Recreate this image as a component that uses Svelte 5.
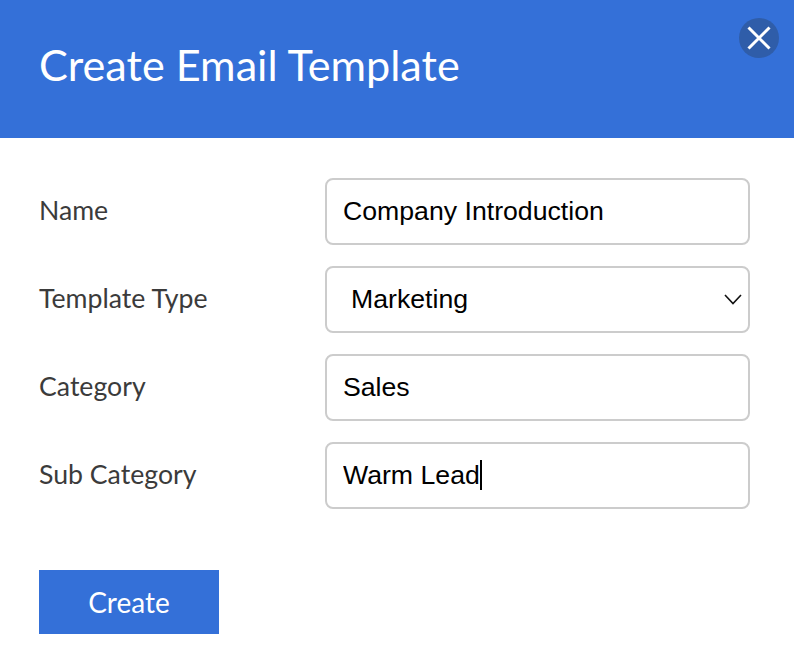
<script lang="ts">
	const fields = [
		{ label: 'Name', value: 'Company Introduction' },
		{ label: 'Template Type', value: 'Marketing', options: ['Marketing', 'Sales', 'Support'] },
		{ label: 'Category', value: 'Sales' },
		{ label: 'Sub Category', value: 'Warm Lead', focused: true }
	];
</script>

<div class="modal">
	<header>
		<h1>Create Email Template</h1>
		<button class="close" aria-label="Close">
			<svg width="24" height="24" viewBox="0 0 24 24" fill="none">
				<path d="M1.5 1.5 L22.5 22.5 M22.5 1.5 L1.5 22.5" stroke="#fff" stroke-width="3" />
			</svg>
		</button>
	</header>

	<form onsubmit={(e) => e.preventDefault()}>
		{#each fields as f}
			<label class="row">
				<span class="lbl">{f.label}</span>
				<span class="control">
					{#if f.options}
						<select value={f.value}>
							{#each f.options as o}
								<option>{o}</option>
							{/each}
						</select>
						<svg class="chevron" width="18" height="11" viewBox="0 0 18 11" fill="none">
							<path d="M1 1 L9 9.5 L17 1" stroke="#111" stroke-width="1.6" />
						</svg>
					{:else}
						<input type="text" value={f.value} />
						{#if f.focused}
							<span class="caret"></span>
						{/if}
					{/if}
				</span>
			</label>
		{/each}

		<button class="create" type="submit">Create</button>
	</form>
</div>

<style>
	:global(body) {
		margin: 0;
		background: #fff;
	}
	.modal {
		width: 794px;
		height: 656px;
		font-family: Lato, sans-serif;
		overflow: hidden;
	}
	header {
		position: relative;
		height: 138px;
		background: #3470d8;
		display: flex;
		align-items: center;
		padding-left: 39px;
	}
	h1 {
		margin: 0;
		font-size: 43.2px;
		font-weight: 400;
		color: #fff;
		line-height: 1;
		padding-bottom: 8px;
	}
	.close {
		position: absolute;
		top: 18px;
		right: 15px;
		width: 40px;
		height: 40px;
		padding: 0;
		border: 0;
		border-radius: 50%;
		background: #2f5da9;
		display: flex;
		align-items: center;
		justify-content: center;
	}
	form {
		padding: 40px 44px 0 39px;
		display: flex;
		flex-direction: column;
		gap: 21px;
	}
	.row {
		display: flex;
		align-items: center;
		justify-content: space-between;
	}
	.lbl {
		font-size: 26.67px;
		color: #3b3b3b;
		padding-bottom: 3px;
	}
	.control {
		position: relative;
		width: 425px;
		height: 67px;
		display: block;
	}
	input,
	select {
		width: 100%;
		height: 100%;
		box-sizing: border-box;
		border: 2px solid #cccccc;
		border-radius: 8px;
		background: #fff;
		font-family: 'Liberation Sans', Arial, sans-serif;
		font-size: 26.67px;
		color: #000;
		outline: none;
		padding: 0 16px 1px;
		margin: 0;
	}
	select {
		appearance: none;
		padding-left: 24px;
	}
	.chevron {
		position: absolute;
		right: 8px;
		top: 28px;
		pointer-events: none;
	}
	.caret {
		position: absolute;
		left: 155px;
		top: 18px;
		width: 2px;
		height: 30px;
		background: #000;
	}
	.create {
		width: 180px;
		height: 64px;
		margin-top: 40px;
		border: 0;
		background: #3470d8;
		color: #fff;
		font-family: Lato, sans-serif;
		font-size: 28px;
		padding: 0;
	}
</style>
